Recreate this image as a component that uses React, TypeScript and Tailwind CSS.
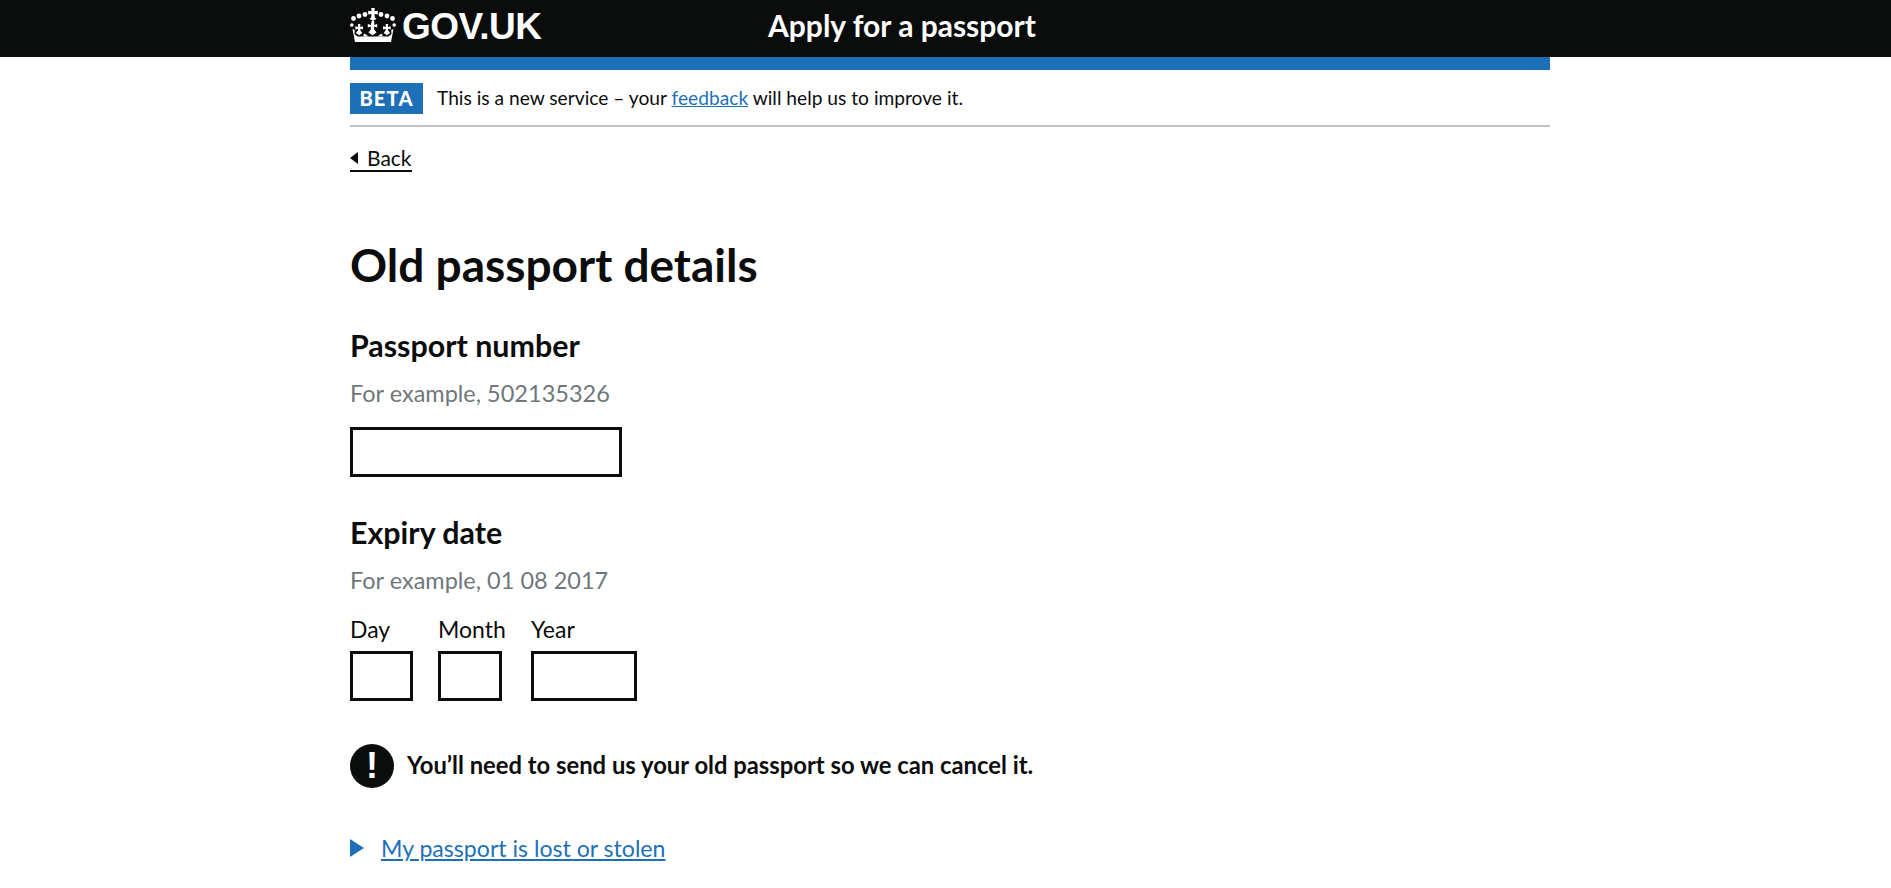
const FONT = "font-['Lato',sans-serif]";

function Crown() {
  return (
    <svg className="-mt-[3px]" width="46" height="34" viewBox="0 0 46 34" fill="white" aria-hidden="true">
      <path d="M21.200 0h3.600l-.4 3.200 3.400-.5v3.800l-3.400-.5.600 3.800 1.600 1-3.600 2.200-3.600-2.200 1.600-1 .6-3.800-3.400.5V2.700l3.400.5z" />
      <circle cx="3.500" cy="10.500" r="2.400" />
      <circle cx="9" cy="8" r="2.400" />
      <circle cx="15" cy="6.500" r="2.400" />
      <circle cx="31" cy="6.500" r="2.400" />
      <circle cx="37" cy="8" r="2.400" />
      <circle cx="42.500" cy="10.500" r="2.400" />
      <circle cx="1.800" cy="17" r="1.800" />
      <circle cx="44.200" cy="17" r="1.800" />
      <path d="M21.800 13h2.400v4l3-1v3.500l-3-1v3l2.300 3-3.500 2.500h-1l-3.500-2.500 2.300-3v-3l-3 1V16l3 1z" />
      <path d="M8 16h2.300v3l2.700-.8v3.300l-2.700-.8v1.500l2 2.800-3.200 2.300-3.200-2.300 2.100-2.800v-1.500l-2.700.8v-3.300l2.700.8z" />
      <path d="M35.700 16H38v3l2.700-.8v3.300l-2.700-.8v1.500l2.100 2.800-3.200 2.300-3.200-2.300 2-2.800v-1.500l-2.700.8v-3.300l2.700.8z" />
      <path d="M2.500 21l2.300 1-.3 4 3 2.500h31l3-2.500-.3-4 2.300-1-2.500 13H5z" />
      <path d="M14 25.500l2.800 1.500 1.400 1.500h-5zM32 25.500l-2.800 1.500-1.400 1.500h5z" />
    </svg>
  );
}

function Field({ label, hint, children }: { label: string; hint: string; children: React.ReactNode }) {
  return (
    <div>
      <h2 className="text-[30.400px] font-bold leading-[36px] text-[#0b0c0c]">{label}</h2>
      <p className="mt-[15px] text-[23.500px] leading-[30px] text-[#6f777b]">{hint}</p>
      {children}
    </div>
  );
}

function DatePart({ label, width }: { label: string; width: string }) {
  return (
    <div className={width}>
      <label className="block text-[23px] leading-[30px] text-[#0b0c0c]">{label}</label>
      <input className="mt-[7px] block h-[50px] w-full border-[3px] border-[#0b0c0c] bg-white" />
    </div>
  );
}

export default function App() {
  return (
    <div className={`${FONT} min-h-[888px] bg-white text-[#0b0c0c]`}>
      <header className="h-[57px] bg-[#0b0c0c]">
        <div className="ml-[350px] flex h-full w-[1200px] items-center">
          <div className="flex w-[418px] -translate-y-[2px] items-center gap-[6px]">
            <Crown />
            <span className="font-['Liberation_Sans',sans-serif] text-[37px] font-bold leading-none tracking-[-0.5px] text-white">
              GOV.UK
            </span>
          </div>
          <span className="pb-[7px] text-[30px] font-bold leading-[36px] text-white">Apply for a passport</span>
        </div>
      </header>

      <main className="ml-[350px] w-[1200px]">
        <div className="h-[13px] bg-[#1d70b8]" />

        <div className="flex h-[57px] items-center border-b-2 border-[#bfc1c3] pt-[1px]">
          <strong className="flex h-[31px] w-[73px] items-center justify-center bg-[#1d70b8] text-[20px] font-black tracking-[1.200px] text-white">
            BETA
          </strong>
          <p className="ml-[14px] text-[19.200px] text-[#0b0c0c]">
            This is a new service – your{" "}
            <a href="#" className="text-[#1d70b8] underline">feedback</a>{" "}
            will help us to improve it.
          </p>
        </div>

        <a href="#" className="mt-[18px] inline-flex h-[27px] items-center gap-[9px] border-b-2 border-[#0b0c0c] text-[21px] leading-[26px] text-[#0b0c0c]">
          <span className="h-0 w-0 border-y-[6px] border-r-[8px] border-y-transparent border-r-[#0b0c0c]" />
          Back
        </a>

        <h1 className="mt-[63px] text-[46px] font-bold leading-[60px] text-[#0b0c0c]">Old passport details</h1>

        <div className="mt-[32px]">
          <Field label="Passport number" hint="For example, 502135326">
            <input className="mt-[19px] block h-[50px] w-[272px] border-[3px] border-[#0b0c0c] bg-white" />
          </Field>
        </div>

        <div className="mt-[37px]">
          <Field label="Expiry date" hint="For example, 01 08 2017">
            <div className="mt-[19px] flex">
              <DatePart label="Day" width="w-[63px]" />
              <DatePart label="Month" width="ml-[25px] w-[64px]" />
              <DatePart label="Year" width="ml-[29px] w-[106px]" />
            </div>
          </Field>
        </div>

        <div className="mt-[43px] flex items-center gap-[13px]">
          <span className="flex h-[44px] w-[44px] items-center justify-center rounded-full bg-[#0b0c0c] font-['Liberation_Sans',sans-serif] text-[36px] font-bold leading-none text-white">
            !
          </span>
          <strong className="text-[23.800px] font-bold text-[#0b0c0c]">
            You’ll need to send us your old passport so we can cancel it.
          </strong>
        </div>

        <div className="mt-[45px] flex items-center gap-[17px]">
          <span className="h-0 w-0 border-y-[9px] border-l-[14px] border-y-transparent border-l-[#1d70b8]" />
          <a href="#" className="text-[23.100px] leading-[30px] text-[#1d70b8] underline">My passport is lost or stolen</a>
        </div>
      </main>
    </div>
  );
}
